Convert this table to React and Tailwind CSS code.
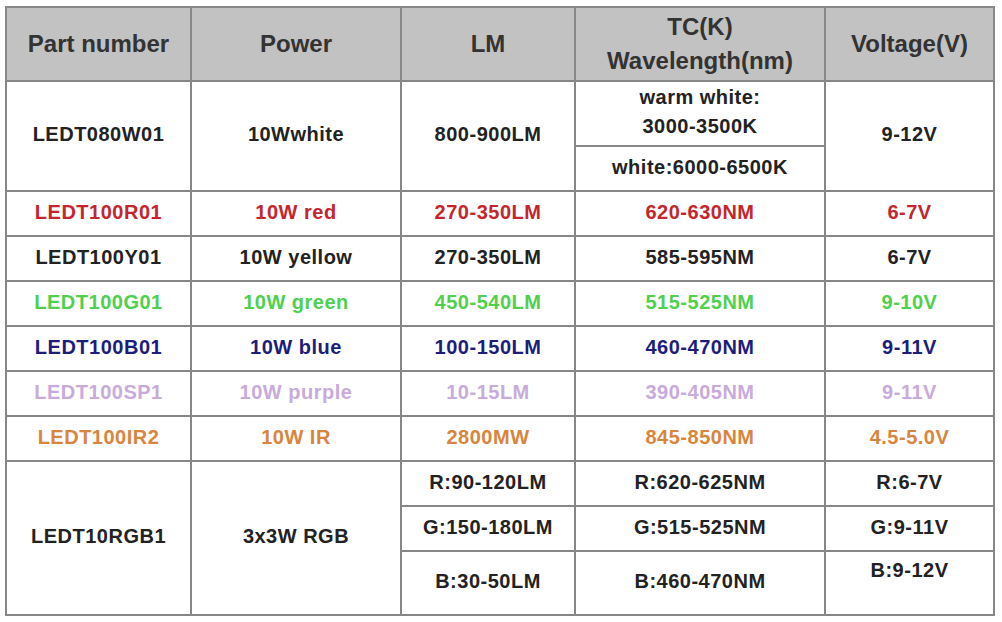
const rows = [
  { part: 'LEDT100R01', power: '10W red', lm: '270-350LM', tc: '620-630NM', v: '6-7V', color: 'text-[#c3262d]' },
  { part: 'LEDT100Y01', power: '10W yellow', lm: '270-350LM', tc: '585-595NM', v: '6-7V', color: 'text-[#222222]' },
  { part: 'LEDT100G01', power: '10W green', lm: '450-540LM', tc: '515-525NM', v: '9-10V', color: 'text-[#4fd04f]' },
  { part: 'LEDT100B01', power: '10W blue', lm: '100-150LM', tc: '460-470NM', v: '9-11V', color: 'text-[#1d1d7c]' },
  { part: 'LEDT100SP1', power: '10W purple', lm: '10-15LM', tc: '390-405NM', v: '9-11V', color: 'text-[#c8abdc]' },
  { part: 'LEDT100IR2', power: '10W IR', lm: '2800MW', tc: '845-850NM', v: '4.5-5.0V', color: 'text-[#d8853d]' },
];

const head = 'border-2 border-[#878787] text-center align-middle p-0';
const cell = 'border-2 border-[#878787] text-center align-middle px-0 pt-0 pb-[4px]';

export default function App() {
  return (
    <div className="w-[1002px] h-[622px] bg-white pt-[6px] pl-[5px] font-['Liberation_Sans',Arial,sans-serif]">
      <table className="border-collapse table-fixed w-[988px] text-[20px] font-bold tracking-[0.5px] text-[#222222]">
        <colgroup>
          <col className="w-[185px]" />
          <col className="w-[210px]" />
          <col className="w-[174px]" />
          <col className="w-[250px]" />
          <col className="w-[169px]" />
        </colgroup>
        <thead>
          <tr className="h-[74px] bg-[#c2c2c2] text-[24px] text-[#333333] tracking-normal">
            <th className={head}>Part number</th>
            <th className={head}>Power</th>
            <th className={head}>LM</th>
            <th className={`${head} leading-[34px]`}>
              TC(K)
              <br />
              Wavelength(nm)
            </th>
            <th className={head}>Voltage(V)</th>
          </tr>
        </thead>
        <tbody>
          <tr className="h-[65px]">
            <td rowSpan={2} className={cell}>LEDT080W01</td>
            <td rowSpan={2} className={cell}>10Wwhite</td>
            <td rowSpan={2} className={cell}>800-900LM</td>
            <td className={`${cell} leading-[29px]`}>
              warm white:
              <br />
              3000-3500K
            </td>
            <td rowSpan={2} className={cell}>9-12V</td>
          </tr>
          <tr className="h-[45px]">
            <td className={cell}>white:6000-6500K</td>
          </tr>
          {rows.map((r) => (
            <tr key={r.part} className={`h-[45px] ${r.color}`}>
              <td className={cell}>{r.part}</td>
              <td className={cell}>{r.power}</td>
              <td className={cell}>{r.lm}</td>
              <td className={cell}>{r.tc}</td>
              <td className={cell}>{r.v}</td>
            </tr>
          ))}
          <tr className="h-[45px]">
            <td rowSpan={3} className={cell}>LEDT10RGB1</td>
            <td rowSpan={3} className={cell}>3x3W RGB</td>
            <td className={cell}>R:90-120LM</td>
            <td className={cell}>R:620-625NM</td>
            <td className={cell}>R:6-7V</td>
          </tr>
          <tr className="h-[45px]">
            <td className={cell}>G:150-180LM</td>
            <td className={cell}>G:515-525NM</td>
            <td className={cell}>G:9-11V</td>
          </tr>
          <tr className="h-[64px]">
            <td className={cell}>B:30-50LM</td>
            <td className={cell}>B:460-470NM</td>
            <td className={`${cell} !align-top !pt-[3px]`}>B:9-12V</td>
          </tr>
        </tbody>
      </table>
    </div>
  );
}
